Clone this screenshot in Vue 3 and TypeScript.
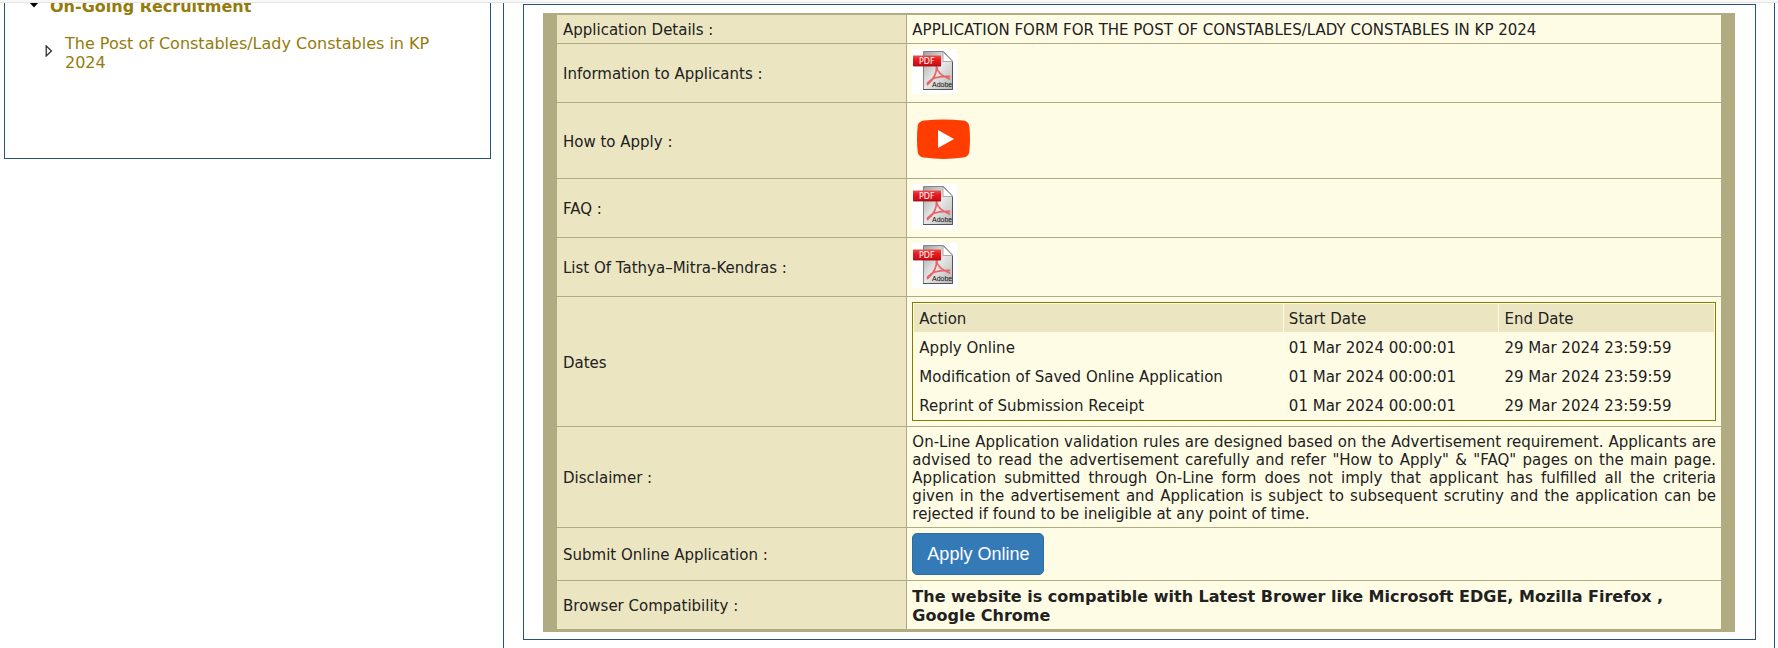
<script setup lang="ts">
interface DateRow {
  action: string
  start: string
  end: string
}

type RowKind = 'text' | 'pdf' | 'video' | 'dates' | 'disclaimer' | 'apply' | 'notice'

interface DetailRow {
  label: string
  kind: RowKind
}

const rows: DetailRow[] = [
  { label: 'Application Details :', kind: 'text' },
  { label: 'Information to Applicants :', kind: 'pdf' },
  { label: 'How to Apply :', kind: 'video' },
  { label: 'FAQ :', kind: 'pdf' },
  { label: 'List Of Tathya–Mitra-Kendras :', kind: 'pdf' },
  { label: 'Dates', kind: 'dates' },
  { label: 'Disclaimer :', kind: 'disclaimer' },
  { label: 'Submit Online Application :', kind: 'apply' },
  { label: 'Browser Compatibility :', kind: 'notice' },
]

const start = '01 Mar 2024 00:00:01'
const end = '29 Mar 2024 23:59:59'
const dates: DateRow[] = [
  { action: 'Apply Online', start, end },
  { action: 'Modification of Saved Online Application', start, end },
  { action: 'Reprint of Submission Receipt', start, end },
]
</script>

<template>
  <div class="page">
    <div class="topbar"></div>
    <div class="columns">
      <nav class="sidebar">
        <h2 class="group">
          <svg class="caret" width="10" height="6" viewBox="0 0 10 6" aria-hidden="true">
            <path d="M0 0H10L5 5.5Z" fill="#000" />
          </svg>
          <span>On-Going Recruitment</span>
        </h2>
        <ul class="links">
          <li>
            <svg class="arrow" width="8" height="12" viewBox="0 0 8 12" aria-hidden="true">
              <path d="M1.2 1L6.5 6L1.2 11Z" fill="#fff" stroke="#333" stroke-width="1.3" />
            </svg>
            <a href="#post">The Post of Constables/Lady Constables in KP 2024</a>
          </li>
        </ul>
      </nav>

      <main class="content">
        <section class="panel">
          <table class="details">
            <tbody>
              <tr v-for="row in rows" :key="row.label" :class="row.kind">
                <th scope="row">{{ row.label }}</th>
                <td v-if="row.kind === 'text'" class="copy">
                  APPLICATION FORM FOR THE POST OF CONSTABLES/LADY CONSTABLES IN KP 2024
                </td>
                <td v-else-if="row.kind === 'pdf'">
                  <a href="#pdf" :aria-label="row.label">
                    <svg width="45" height="45" viewBox="0 0 45 45">
                      <defs>
                        <linearGradient id="sheet" x1="0" y1="0" x2="1" y2="1">
                          <stop offset="0" stop-color="#a0a0a0" />
                          <stop offset="0.5" stop-color="#e8e8e8" />
                          <stop offset="1" stop-color="#b4b4b4" />
                        </linearGradient>
                        <linearGradient id="band" x1="0" y1="0" x2="0" y2="1">
                          <stop offset="0" stop-color="#f0504c" />
                          <stop offset="0.4" stop-color="#e51a1e" />
                          <stop offset="1" stop-color="#cf0b12" />
                        </linearGradient>
                      </defs>
                      <rect width="45" height="45" fill="#fff" />
                      <path d="M11.5 2.5H31.5L40.5 12V40.5H11.5Z" fill="url(#sheet)" stroke="#858585" />
                      <path d="M11 40.5H40.5V13" fill="none" stroke="#555" />
                      <path d="M31 3V12.5H40.5Z" fill="#fff" stroke="#999" stroke-width=".8" />
                      <path
                        d="M24.5 17C24.8 21 27 26 37.5 30M24.5 17C25 23 22 30 15.5 35.5M15.5 34C19 29.5 27 27 37.5 27.5"
                        fill="none" stroke="#e8666a" stroke-width="1.8" stroke-linecap="round"
                      />
                      <path d="M1 6.5H29V17H1Z" fill="url(#band)" />
                      <path d="M1.5 17H29" stroke="#870c10" stroke-width=".8" />
                      <text x="7" y="15" class="pdf-text">PDF</text>
                      <text x="20" y="38" class="adobe-text">Adobe</text>
                    </svg>
                  </a>
                </td>
                <td v-else-if="row.kind === 'video'">
                  <a href="#video" aria-label="How to Apply">
                    <svg width="64" height="64" viewBox="0 0 64 64">
                      <path
                        d="M12 11.5C25 10 38 10 51 11.5C55 12 57 14 57.4 18C58.2 26 58.2 34 57.4 42C57 46 55 48 51 48.6C38 50.3 25 50.3 12 48.6C8 48 6 46 5.6 42C4.8 34 4.8 26 5.6 18C6 14 8 12 12 11.5Z"
                        fill="#ff3d00"
                      />
                      <path d="M26 21V39L42 30Z" fill="#fff" />
                    </svg>
                  </a>
                </td>
                <td v-else-if="row.kind === 'dates'">
                  <table class="schedule">
                    <thead>
                      <tr>
                        <th scope="col" class="action">Action</th>
                        <th scope="col" class="when">Start Date</th>
                        <th scope="col" class="when">End Date</th>
                      </tr>
                    </thead>
                    <tbody>
                      <tr v-for="d in dates" :key="d.action">
                        <td>{{ d.action }}</td>
                        <td>{{ d.start }}</td>
                        <td>{{ d.end }}</td>
                      </tr>
                    </tbody>
                  </table>
                </td>
                <td v-else-if="row.kind === 'disclaimer'" class="copy">
                  On-Line Application validation rules are designed based on the Advertisement
                  requirement. Applicants are advised to read the advertisement carefully and refer
                  "How to Apply" &amp; "FAQ" pages on the main page. Application submitted through
                  On-Line form does not imply that applicant has fulfilled all the criteria
                  given&nbsp;in the advertisement and Application is subject to subsequent scrutiny
                  and the application can be rejected if found to be ineligible at any point of time.
                </td>
                <td v-else-if="row.kind === 'apply'">
                  <button type="button" class="apply-button">Apply Online</button>
                </td>
                <td v-else class="copy">
                  The website is compatible with Latest Brower like Microsoft EDGE, Mozilla Firefox
                  , Google Chrome
                </td>
              </tr>
            </tbody>
          </table>
        </section>
      </main>
    </div>
  </div>
</template>

<style>
body {
  margin: 0;
  background: #fff;
}
</style>

<style scoped>
.page {
  height: 100vh;
  overflow: hidden;
  display: flex;
  flex-direction: column;
  font-family: Verdana, "DejaVu Sans", sans-serif;
  font-size: 15px;
  line-height: 18px;
  color: #212121;
}

.topbar {
  flex: none;
  height: 2px;
  background: #f8f8f8;
  border-bottom: 1px solid #e4e4e4;
}

.columns {
  flex: 1;
  min-height: 0;
  display: flex;
  align-items: flex-start;
}

.sidebar {
  flex: 0 0 487px;
  box-sizing: border-box;
  height: 156px;
  margin: 0 12px 0 4px;
  border: 1px solid #28527a;
  border-top: 0;
  overflow: hidden;
  font-size: 16px;
  line-height: 19px;
  color: #957b0c;
}

.group {
  display: flex;
  align-items: flex-start;
  gap: 11px;
  margin: -6px 0 0 24px;
  font-size: 16px;
  line-height: 19px;
}

.caret {
  margin-top: 5px;
}

.links {
  list-style: none;
  margin: 18px 0 0;
  padding: 0 40px;
}

.links li {
  display: flex;
  align-items: center;
  gap: 12px;
}

.arrow {
  flex: none;
  margin-bottom: 4px;
}

.links a {
  color: inherit;
  text-decoration: none;
}

.content {
  flex: 1;
  align-self: stretch;
  margin-right: 3px;
  padding: 1px 18px 0 19px;
  border: solid #28527a;
  border-width: 0 1px;
}

.panel {
  padding: 8px 20px 7px 19px;
  border: 1px solid #28527a;
}

.details {
  width: 100%;
  border: solid #b0ab80;
  border-width: 2px 14px 3px;
  border-collapse: separate;
  border-spacing: 0;
  background: #fffce6;
}

.details > tbody > tr > th,
.details > tbody > tr > td {
  box-sizing: border-box;
  padding: 5px;
  border-bottom: 1px solid #b0ab80;
  vertical-align: middle;
}

.details > tbody > tr > th,
.details > tbody > tr > .copy {
  padding-top: 6px;
  padding-bottom: 4px;
}

.details > tbody > tr:last-child > * {
  border-bottom: 0;
}

.details > tbody > tr > th {
  width: 30.1%;
  padding-left: 6px;
  background: #ebe6c1;
  border-right: 1px solid #b0ab80;
  text-align: left;
  font-weight: normal;
}

.text {
  height: 29px;
}

.pdf {
  height: 59px;
}

.details > tbody > .pdf > td {
  vertical-align: top;
}

.video {
  height: 76px;
}

.details svg {
  display: block;
}

.details a {
  display: inline-block;
  vertical-align: top;
}

.disclaimer {
  height: 101px;
}

.disclaimer > td {
  text-align: justify;
}

.apply {
  height: 53px;
}

.notice > td {
  font-size: 16px;
  line-height: 19px;
  font-weight: bold;
}

.schedule {
  width: 100%;
  border: 1px solid #808000;
  border-collapse: separate;
  border-spacing: 1px;
}

.schedule th,
.schedule td {
  padding: 6px 5px 4px;
  text-align: left;
  font-weight: normal;
}

.schedule th {
  background: #ebe6c1;
}

.action {
  width: 46.2%;
}

.when {
  width: 26.9%;
}

.apply-button {
  display: block;
  height: 42px;
  padding: 0 14px;
  border: 1px solid #2e6da4;
  border-radius: 5px;
  background: #337ab7;
  color: #fff;
  font-family: "Liberation Sans", Arial, sans-serif;
  font-size: 18px;
  line-height: 24px;
}

.pdf-text {
  font-size: 8px;
  fill: #fff;
}

.adobe-text {
  font-family: "Liberation Sans", Arial, sans-serif;
  font-size: 7px;
  fill: #111;
}
</style>
